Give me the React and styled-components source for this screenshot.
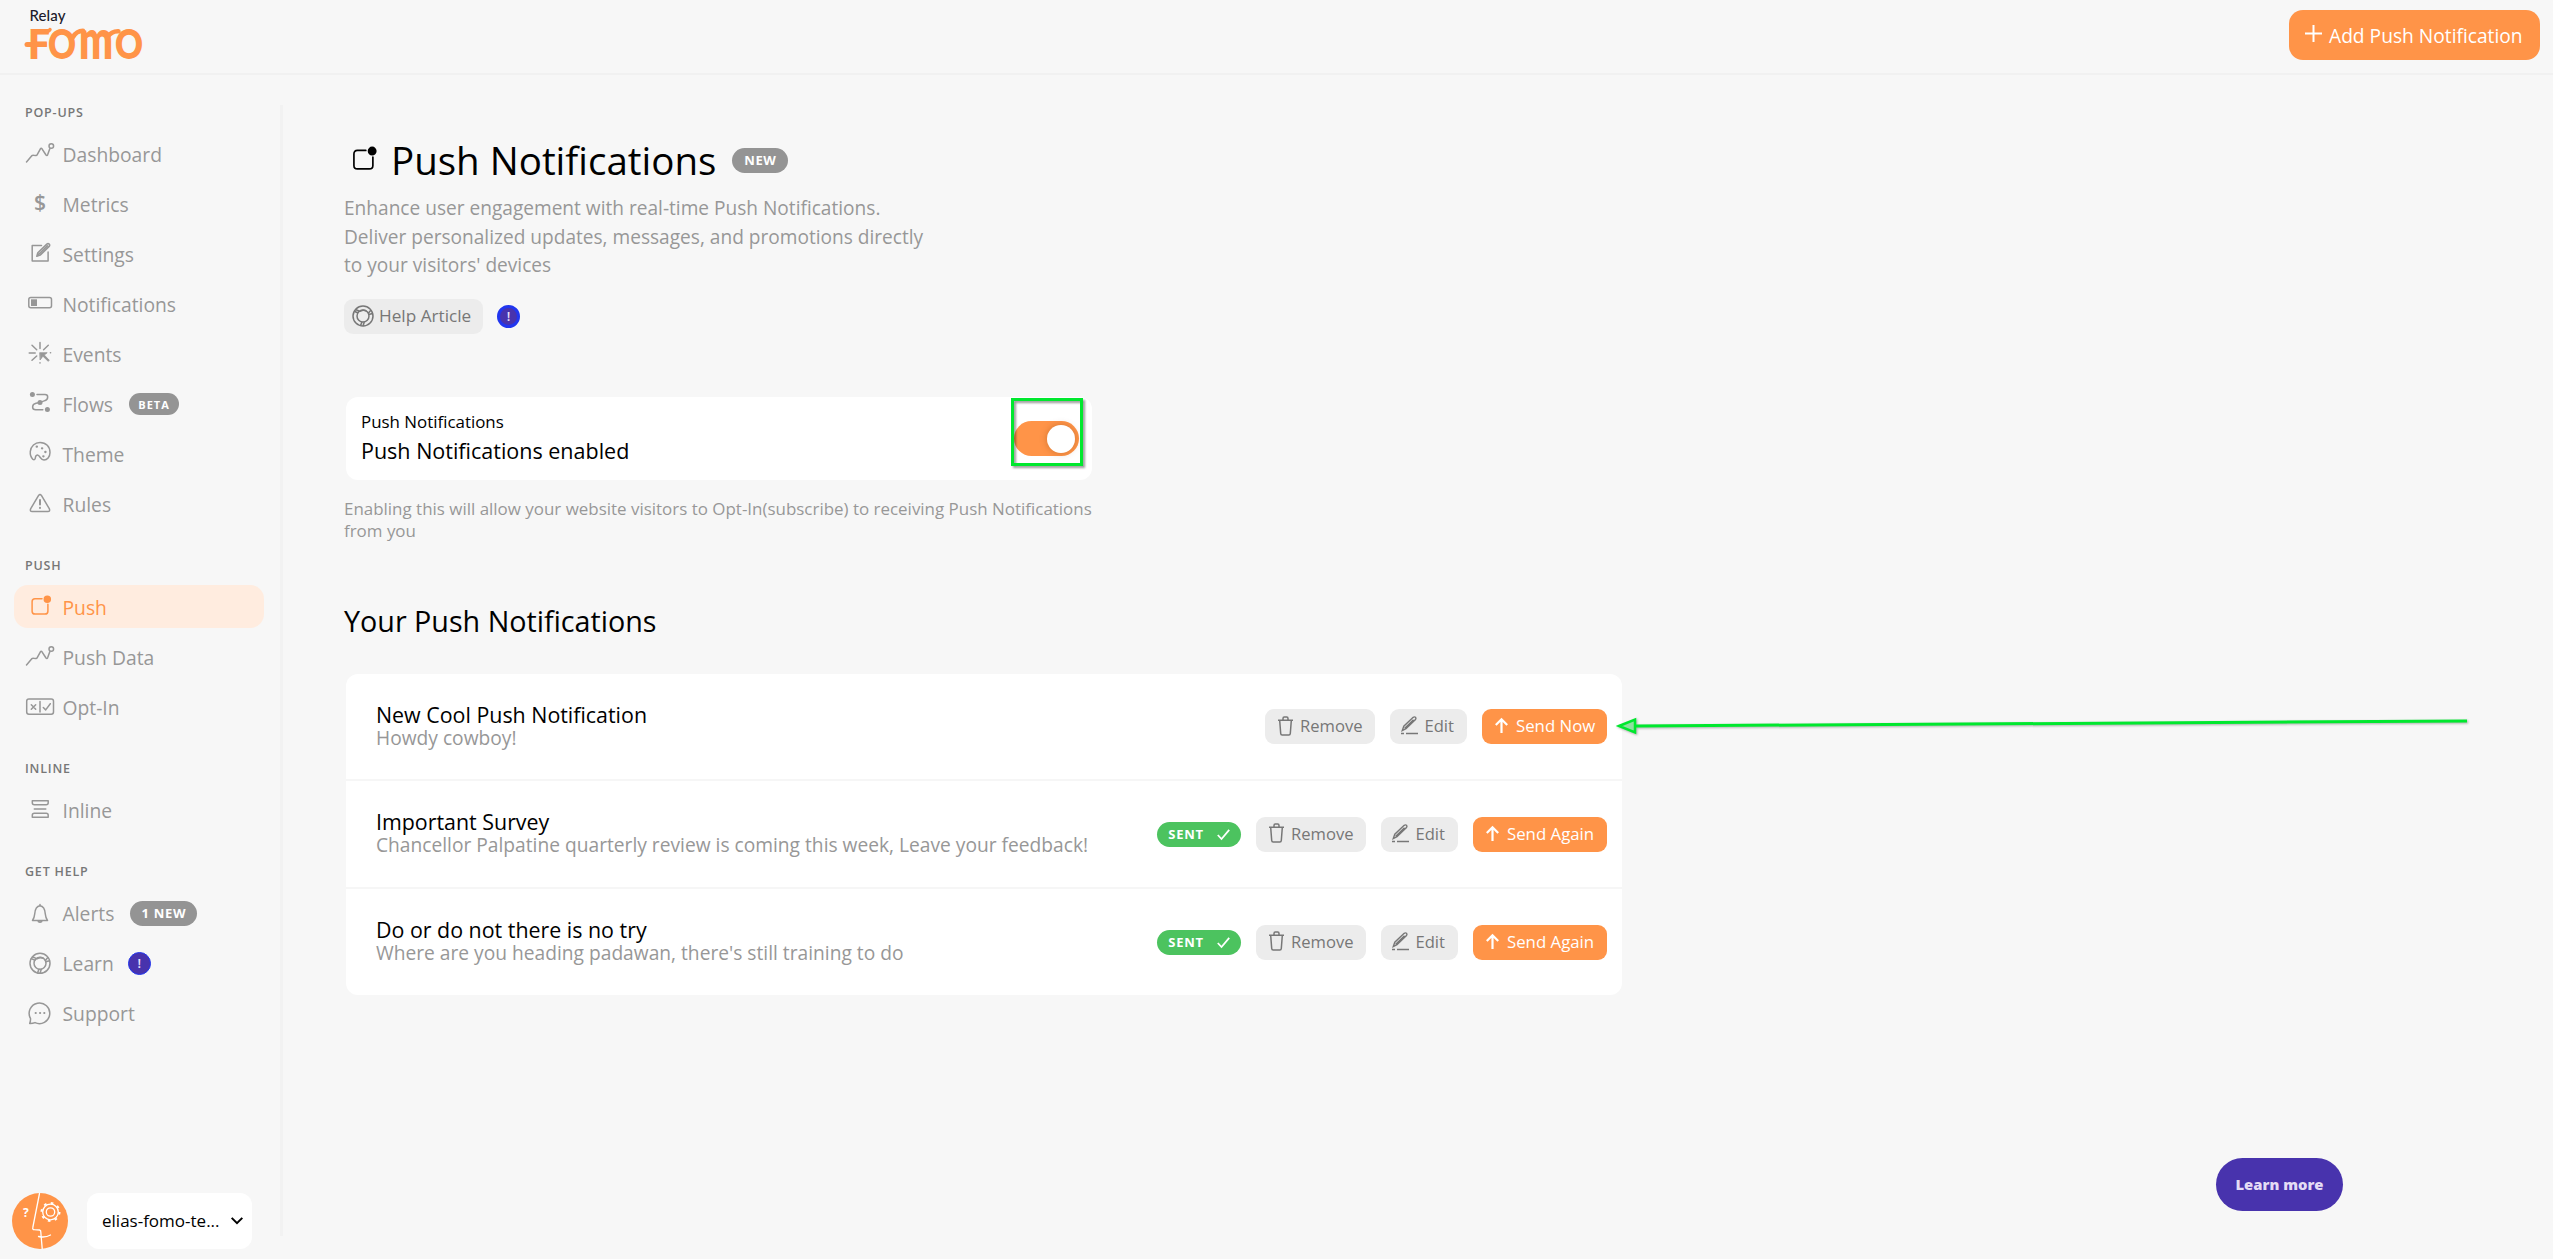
import React from 'react'
import styled, { createGlobalStyle } from 'styled-components'

const GlobalStyle = createGlobalStyle`
    * {
        box-sizing: border-box;
    }
    body {
        margin: 0;
        background: #f7f7f7;
        font-family: "Open Sans", "Liberation Sans", sans-serif;
        color: #000;
        overflow: hidden;
    }
    button {
        font-family: inherit;
        border: none;
        cursor: pointer;
    }
    svg {
        display: block;
        overflow: visible;
        flex: none;
    }
`

const Page = styled.div`
    height: 1259px;
    display: flex;
    flex-direction: column;
    position: relative;
`

const Header = styled.header`
    height: 75px;
    flex: none;
    display: flex;
    justify-content: space-between;
    align-items: flex-start;
    padding: 5px 13px 0 25px;
    border-bottom: 2px solid #f1f1f1;
`

const AddButton = styled.button`
    width: 251px;
    height: 50px;
    margin-top: 5px;
    padding: 0 0 0 16px;
    display: flex;
    align-items: center;
    gap: 7px;
    border-radius: 14px;
    background: #ff9448;
    color: #fff;
    font-size: 19.2px;
    font-weight: 500;
    white-space: nowrap;

    svg {
        margin-top: -3px;
    }
`

const Body = styled.div`
    flex: 1;
    display: flex;
`

const Sidebar = styled.aside`
    width: 283px;
    height: 1131px;
    margin-top: 30px;
    border-right: 3px solid #f2f2f2;
    display: flex;
    flex-direction: column;
`

const Section = styled.section`
    padding-left: 14px;
    margin-bottom: 26px;
`

const SectionTitle = styled.h4`
    margin: 0 0 11px 11px;
    height: 16px;
    line-height: 16px;
    font-size: 12.5px;
    font-weight: 600;
    letter-spacing: 0.8px;
    color: #777;
    text-transform: uppercase;
`

const NavItem = styled.a`
    width: 250px;
    height: 43px;
    margin-bottom: 7px;
    padding: 1px 0 0 12px;
    display: flex;
    align-items: center;
    border-radius: 14px;
    font-size: 19.3px;
    color: ${(p) => (p.$active ? '#ff9448' : '#979797')};
    background: ${(p) => (p.$active ? '#ffecdf' : 'transparent')};

    svg {
        margin: -3px 8.5px 0 0;
    }
`

const Badge = styled.span`
    height: ${(p) => (p.$small ? 22 : 25)}px;
    width: ${(p) => p.$width}px;
    margin-left: ${(p) => p.$left || 15}px;
    display: inline-flex;
    align-items: center;
    justify-content: center;
    gap: 13px;
    border-radius: 13px;
    background: ${(p) => (p.$green ? '#4cc35f' : '#949494')};
    color: #fff;
    font-size: ${(p) => (p.$small ? 11 : 13)}px;
    font-weight: 700;
    letter-spacing: ${(p) => (p.$small ? 1 : 0.7)}px;
`

const AlertDot = styled.span`
    width: 23px;
    height: 23px;
    margin-left: 14px;
    display: inline-flex;
    align-items: center;
    justify-content: center;
    border-radius: 50%;
    border: ${(p) => p.$ring || 1.5}px solid #2136ef;
    background: #4833ad;
    color: #e8e2fb;
    font-size: 13px;
    font-weight: 600;
    line-height: 1;
`

const Account = styled.div`
    margin-top: auto;
    margin-bottom: -13px;
    padding-left: 12px;
    display: flex;
    gap: 19px;
`

const SiteSelect = styled.div`
    width: 165px;
    height: 56px;
    padding: 0 9px 1px 15px;
    display: flex;
    align-items: center;
    justify-content: space-between;
    border-radius: 12px;
    background: #fff;
    font-size: 17px;
`

const Main = styled.main`
    padding: 59px 0 0 61px;
`

const TitleRow = styled.div`
    height: 52px;
    display: flex;
    align-items: center;
    padding-left: 8px;

    svg {
        margin-top: 2px;
    }
`

const Title = styled.h1`
    margin: 0 1px 0 9px;
    font-size: 38.5px;
    font-weight: 400;
    line-height: 52px;
`

const Lead = styled.p`
    margin: 8px 0 0;
    font-size: 19.1px;
    line-height: 28.5px;
    color: #979797;
    white-space: pre-line;
`

const HelpRow = styled.div`
    margin-top: 19.5px;
    display: flex;
    align-items: center;
`

const Button = styled.button`
    width: ${(p) => p.$width}px;
    height: 35px;
    padding: 0 0 2px ${(p) => p.$pad || 13}px;
    display: flex;
    align-items: center;
    gap: ${(p) => p.$gap || 7}px;
    border-radius: 9px;
    font-size: ${(p) => p.$size || 16.6}px;
    white-space: nowrap;
    background: ${(p) => (p.$primary ? '#ff9448' : '#ececec')};
    color: ${(p) => (p.$primary ? '#fff' : '#777')};
    font-weight: ${(p) => (p.$primary ? 500 : 400)};
`

const ToggleCard = styled.div`
    width: 746px;
    height: 83px;
    margin: 63px 0 0 2px;
    padding: 0 13px 0 15px;
    display: flex;
    justify-content: space-between;
    align-items: center;
    border-radius: 12px;
    background: #fff;
`

const ToggleLabel = styled.div`
    padding-top: 3px;
    font-size: 16.9px;
    line-height: 22px;
`

const ToggleState = styled.div`
    font-size: 21.5px;
    line-height: 36px;
`

const Switch = styled.div`
    position: relative;
    width: 65px;
    height: 35px;
    padding: 4px;
    display: flex;
    justify-content: flex-end;
    border-radius: 18px;
    background: #ff9448;
`

const Knob = styled.div`
    width: 28px;
    height: 28px;
    border-radius: 50%;
    background: #fff;
    box-shadow: 0 0 7px rgba(120, 60, 10, 0.35);
`

const Highlight = styled.div`
    position: absolute;
    left: -3px;
    top: -23px;
    width: 72px;
    height: 68px;
    border: 3px solid #00e82e;
    filter: drop-shadow(2px 2px 1px rgba(0, 0, 0, 0.4));
`

const Hint = styled.p`
    width: 760px;
    margin: 18px 0 0;
    font-size: 16.95px;
    line-height: 22px;
    color: #979797;
    white-space: pre-line;
`

const Subtitle = styled.h2`
    margin: 59px 0 0;
    font-size: 28.7px;
    line-height: 40px;
    font-weight: 400;
`

const List = styled.div`
    width: 1276px;
    margin: 33px 0 0 2px;
    border-radius: 12px;
    background: #fff;
`

const Row = styled.div`
    height: 105px;
    padding: 0 15px 0 30px;
    display: flex;
    justify-content: space-between;
    align-items: center;

    & + & {
        height: 108px;
        border-top: 2px solid #f6f6f6;
    }
`

const RowInfo = styled.div`
    margin-bottom: 1px;
`

const RowTitle = styled.div`
    font-size: 21.4px;
    line-height: 22px;
`

const RowText = styled.div`
    font-size: 19.2px;
    line-height: 23px;
    color: #979797;
`

const Actions = styled.div`
    display: flex;
    align-items: center;
    gap: 15px;
`

const LearnMore = styled.button`
    position: absolute;
    left: 2216px;
    top: 1158px;
    width: 127px;
    height: 53px;
    padding: 0 0 1px;
    border-radius: 27px;
    background: #4833ad;
    color: #e4dcf5;
    font-size: 14.8px;
    font-weight: 800;
`

const Pointer = styled.svg`
    position: absolute;
    left: 1616px;
    top: 715px;
    filter: drop-shadow(1px 1px 1px rgba(0, 0, 0, 0.3));
`

const NavIcon = ({ children }) => (
    <svg width="28" height="24" viewBox="0 0 28 24" fill="none" stroke="currentColor" strokeWidth="1.5" strokeLinecap="round" strokeLinejoin="round">
        {children}
    </svg>
)

const ChartIcon = () => (
    <NavIcon>
        <path d="M.5 21 6 14.6q.6-.6 1.500-.4l2.300.3q.9.100 1.300-.7l3.300-6q.8-1.100 1.600 0l4 6.200q.9 1.100 1.600-.2l2.200-6" />
        <circle cx="25.300" cy="5" r="2.300" />
    </NavIcon>
)

const LifeRing = ({ size = 22 }) => (
    <svg width={size} height={size} viewBox="0 0 22 22" fill="none" stroke="currentColor" strokeWidth="1.5">
        <circle cx="11" cy="11" r="10" />
        <circle cx="11" cy="11" r="6" />
        <path d="M3.500 4.500 7.500 6.300M2.300 6.300 6 8M18.800 5.200l-2.500 3M20.500 8.500l-3.700 1M10 17l-1.500 3.600M12.300 17l-1.300 4" />
        <path d="M8 6.500q3-2 6.500-.6" />
    </svg>
)

const PushIcon = () => (
    <>
        <path d="M16 4.700H9q-2.900 0-2.900 3v9.500q0 2.900 2.900 2.900h10q2.900 0 2.900-2.900v-7" />
        <circle cx="21.300" cy="5.200" r="3" fill="currentColor" />
    </>
)

const icons = {
    dashboard: <ChartIcon />,
    metrics: (
        <NavIcon>
            <text x="14" y="18.500" fontSize="21" fontWeight="600" textAnchor="middle" fill="currentColor" stroke="none">$</text>
        </NavIcon>
    ),
    settings: (
        <NavIcon>
            <path d="M15.500 4.500H6.200V20h15.900v-9" />
            <path d="m10.800 15.200 1-3.400 9-8.700q1.300-1 2.400 0 1 1.200 0 2.300l-9 8.700zM12.500 13.500l9-8.700" />
        </NavIcon>
    ),
    notifications: (
        <NavIcon>
            <rect x="2.800" y="6.600" width="22.700" height="10.200" rx="2" />
            <rect x="5" y="8.300" width="6" height="6.700" fill="currentColor" stroke="none" />
        </NavIcon>
    ),
    events: (
        <NavIcon>
            <path d="M14 1.500v6M6 4.300l4.700 4.400M3.200 12h6M6 19.300l4.700-4.300M22.300 4.300l-4.700 4.400M14 21.800v.2M24.400 11.800h.2" />
            <path d="M14 11.700h7.200L18.300 14l5 5.300-1.200 1-5.200-5.100-2.600 3.500z" fill="currentColor" strokeWidth=".8" />
        </NavIcon>
    ),
    flows: (
        <NavIcon>
            <circle cx="6.400" cy="3.500" r="2.500" fill="currentColor" stroke="none" />
            <circle cx="14" cy="11.400" r="2.500" fill="currentColor" stroke="none" />
            <circle cx="21.400" cy="18.500" r="2.500" fill="currentColor" stroke="none" />
            <path d="M11 3.400h8q2.700 0 2.700 2.500 0 3-3.500 4l-4.200 1.500-4 .8Q6.600 13 6.600 16q0 2.800 3.200 2.800h7" />
        </NavIcon>
    ),
    theme: (
        <NavIcon>
            <path d="M7 18.500C5 16.500 4 13.500 4.300 10.500 4.800 5 9 1.500 14 1.500c6 0 10 4 10 10 0 4.500-3 7.500-6 7.500s-3.500-3-5.500-4.500c-1.500-1-2.700 0-3 1.500-.2 2-1 3.500-2.500 2.500z" />
            <path d="M10.700 5.700h.2M16 7.300h.2M19.300 11h.2M17.300 15.300h.2" strokeWidth="2.300" />
        </NavIcon>
    ),
    rules: (
        <NavIcon>
            <path d="M12.600 4.400q1.400-1.700 2.800 0l8 13.500q.9 2.500-1.500 2.600H6.100q-2.400-.1-1.500-2.600z" />
            <path d="M14 9v4.500M14 16.800v.2" strokeWidth="2" />
        </NavIcon>
    ),
    push: (
        <NavIcon><PushIcon /></NavIcon>
    ),
    optin: (
        <NavIcon>
            <rect x=".7" y="5" width="26.800" height="15.200" rx="2.200" />
            <path d="m5.300 10.700 4.400 4.600M9.700 10.700l-4.400 4.600M14 7.500V18M17.300 13.500l2.400 2.400 4.600-6.200" />
        </NavIcon>
    ),
    inline: (
        <NavIcon>
            <path d="M6.300 3.700h15.900v2.100q0 2-2 2H8.300q-2 0-2-2zM8.300 12h11.500M6.300 20.300h15.900v-2q0-2-2-2H8.300q-2 0-2 2z" />
        </NavIcon>
    ),
    alerts: (
        <NavIcon>
            <path d="M6.500 20.500h15q-1.800-2.500-2.200-6.500-.6-7.700-5.300-8.200-4.700.5-5.300 8.200-.4 4-2.200 6.500zM14 5.600V4.400M12.300 21.700q1.700 1.300 3.400 0" />
        </NavIcon>
    ),
    learn: (
        <NavIcon>
            <g transform="translate(3 2.300)"><LifeRing /></g>
        </NavIcon>
    ),
    support: (
        <NavIcon>
            <path d="M3.700 23.400q1-2 .8-5A10.300 10.300 0 1 1 9 22.600q-2.300.9-5.300.8z" />
            <path d="M9.600 13h.2M14 13h.2M18.200 13h.2" strokeWidth="2" />
        </NavIcon>
    ),
}

const menu = [
    {
        title: 'Pop-ups',
        items: [
            { icon: 'dashboard', label: 'Dashboard' },
            { icon: 'metrics', label: 'Metrics' },
            { icon: 'settings', label: 'Settings' },
            { icon: 'notifications', label: 'Notifications' },
            { icon: 'events', label: 'Events' },
            { icon: 'flows', label: 'Flows', badge: 'BETA' },
            { icon: 'theme', label: 'Theme' },
            { icon: 'rules', label: 'Rules' },
        ],
    },
    {
        title: 'Push',
        items: [
            { icon: 'push', label: 'Push', active: true },
            { icon: 'dashboard', label: 'Push Data' },
            { icon: 'optin', label: 'Opt-In' },
        ],
    },
    {
        title: 'Inline',
        items: [{ icon: 'inline', label: 'Inline' }],
    },
    {
        title: 'Get help',
        items: [
            { icon: 'alerts', label: 'Alerts', badge: '1 NEW' },
            { icon: 'learn', label: 'Learn', dot: true },
            { icon: 'support', label: 'Support' },
        ],
    },
]

const notifications = [
    { title: 'New Cool Push Notification', text: 'Howdy cowboy!', sent: false },
    { title: 'Important Survey', text: 'Chancellor Palpatine quarterly review is coming this week, Leave your feedback!', sent: true },
    { title: 'Do or do not there is no try', text: "Where are you heading padawan, there's still training to do", sent: true },
]

const Logo = () => (
    <svg width="120" height="60" viewBox="25 5 120 60">
        <text x="29.500" y="20.500" fontFamily="Lato" fontSize="15" fontWeight="500" fill="#1c1b2b" textLength="36">Relay</text>
        <g fill="#ff9448" fontFamily="Lato" fontWeight="800">
            <text x="28" y="58.500" fontSize="42" textLength="22" lengthAdjust="spacingAndGlyphs">F</text>
            <text x="48" y="58.500" fontSize="42" textLength="28" lengthAdjust="spacingAndGlyphs">O</text>
            <text x="79" y="58.500" fontSize="55" textLength="34" lengthAdjust="spacingAndGlyphs">m</text>
            <text x="115" y="58.500" fontSize="42" textLength="28" lengthAdjust="spacingAndGlyphs">O</text>
        </g>
        <g stroke="#ff9448" fill="none" strokeLinecap="round">
            <path d="M27 44.500h17" strokeWidth="5" />
            <path d="M46 31.500q3 0 4-2" strokeWidth="3.500" />
            <path d="M73 37q3.500-6 10-6.200M107.500 37q4-6 11-5.700" strokeWidth="4.500" />
        </g>
    </svg>
)

const Avatar = () => (
    <svg width="56" height="56" viewBox="0 0 56 56" fill="none" stroke="#fff" strokeWidth="1.300" strokeLinecap="round">
        <circle cx="28" cy="28" r="28" fill="#ff9448" stroke="none" />
        <path d="M27.500.5 20.800 34.500q-.5 2 1.500 2.200l5.200.3q1.500.4 1.300 2l.4 5 1 11.500M26.500 43.500q7 1.500 12-1.500" />
        <circle cx="38.500" cy="19" r="4.200" />
        <circle cx="38.500" cy="19" r="7.800" />
        <circle cx="38.500" cy="19" r="9" strokeWidth="2" strokeDasharray="2.600 4.470" strokeLinecap="butt" />
        <text x="11" y="23.500" fontSize="12" fontWeight="700" fill="#fff" stroke="none">?</text>
    </svg>
)

const TrashIcon = () => (
    <svg width="15" height="20" viewBox="0 0 15 20" fill="none" stroke="currentColor" strokeWidth="1.500">
        <path d="M0 4.300h15M1.700 4.500l1 13q.1 1.500 1.500 1.500h6.600q1.400 0 1.500-1.500l1-13M5 4V2.500Q5 1 6.300 1h2.400Q10 1 10 2.500V4" />
    </svg>
)

const PencilIcon = () => (
    <svg width="17" height="19" viewBox="0 0 17 19" fill="none" stroke="currentColor" strokeWidth="1.400">
        <path d="m1.300 14.500 1.500-4.300L12.200 1.300q1.300-.8 2.300 0 .9 1.100 0 2.300L5 12.600zM3.500 12.500l9-8.700M0 17.500h3M5 17.500h12" />
    </svg>
)

const ArrowUp = () => (
    <svg width="13" height="15" viewBox="0 0 13 15" fill="none" stroke="currentColor" strokeWidth="2.200">
        <path d="M6.500 15V1.500M.8 7l5.700-5.700L12.200 7" />
    </svg>
)

const CheckIcon = () => (
    <svg width="13" height="11" viewBox="0 0 13 11" fill="none" stroke="#fff" strokeWidth="1.800">
        <path d="m.8 6 3.700 4L12.200.8" />
    </svg>
)

const App = () => {
  return (
    <Page>
        <GlobalStyle />
        <Header>
            <Logo />
            <AddButton>
                <svg width="17" height="17" viewBox="0 0 17 17" stroke="#fff" strokeWidth="2">
                    <path d="M8.500 0v17M0 8.500h17" />
                </svg>
                Add Push Notification
            </AddButton>
        </Header>
        <Body>
            <Sidebar>
                {menu.map((section) => (
                    <Section key={section.title}>
                        <SectionTitle>{section.title}</SectionTitle>
                        {section.items.map((item) => (
                            <NavItem key={item.label} $active={item.active}>
                                {icons[item.icon]}
                                {item.label}
                                {item.badge && (
                                    <Badge $left={16} $small={item.badge === 'BETA'} $width={item.badge === 'BETA' ? 50 : 67}>{item.badge}</Badge>
                                )}
                                {item.dot && <AlertDot>!</AlertDot>}
                            </NavItem>
                        ))}
                    </Section>
                ))}
                <Account>
                    <Avatar />
                    <SiteSelect>
                        elias-fomo-te...
                        <svg width="12" height="8" viewBox="0 0 12 8" fill="none" stroke="#000" strokeWidth="2">
                            <path d="m.7.9 5.300 5.300L11.300.9" />
                        </svg>
                    </SiteSelect>
                </Account>
            </Sidebar>
            <Main>
                <TitleRow>
                    <svg width="30" height="30" viewBox="4.500 1 25 25" fill="none" stroke="#000" strokeWidth="1.400" strokeLinecap="round">
                        <PushIcon />
                    </svg>
                    <Title>Push Notifications</Title>
                    <Badge $width={56}>NEW</Badge>
                </TitleRow>
                <Lead>
                    {'Enhance user engagement with real-time Push Notifications.\nDeliver personalized updates, messages, and promotions directly\nto your visitors\' devices'}
                </Lead>
                <HelpRow>
                    <Button $width={139} $pad={8} $gap={5} $size={17.2}>
                        <LifeRing />
                        Help Article
                    </Button>
                    <AlertDot $ring={3}>!</AlertDot>
                </HelpRow>
                <ToggleCard>
                    <div>
                        <ToggleLabel>Push Notifications</ToggleLabel>
                        <ToggleState>Push Notifications enabled</ToggleState>
                    </div>
                    <Switch>
                        <Knob />
                        <Highlight />
                    </Switch>
                </ToggleCard>
                <Hint>
                    {'Enabling this will allow your website visitors to Opt-In(subscribe) to receiving Push Notifications\nfrom you'}
                </Hint>
                <Subtitle>Your Push Notifications</Subtitle>
                <List>
                    {notifications.map((item) => (
                        <Row key={item.title}>
                            <RowInfo>
                                <RowTitle>{item.title}</RowTitle>
                                <RowText>{item.text}</RowText>
                            </RowInfo>
                            <Actions>
                                {item.sent && (
                                    <Badge $green $width={84}>
                                        SENT
                                        <CheckIcon />
                                    </Badge>
                                )}
                                <Button $width={109.5}><TrashIcon />Remove</Button>
                                <Button $width={77.5} $pad={11}><PencilIcon />Edit</Button>
                                <Button $primary $gap={8} $size={16.8} $width={item.sent ? 134 : 125}>
                                    <ArrowUp />
                                    {item.sent ? 'Send Again' : 'Send Now'}
                                </Button>
                            </Actions>
                        </Row>
                    ))}
                </List>
            </Main>
        </Body>
        <Pointer width="852" height="22" viewBox="0 0 852 22" fill="none" stroke="#00e82e" strokeWidth="3">
            <path d="M20 11 851 6" />
            <path d="M3 11 19 4.500v13z" strokeWidth="2.500" fill="#8fe0a0" />
        </Pointer>
        <LearnMore>Learn more</LearnMore>
    </Page>
  )
}

export default App
